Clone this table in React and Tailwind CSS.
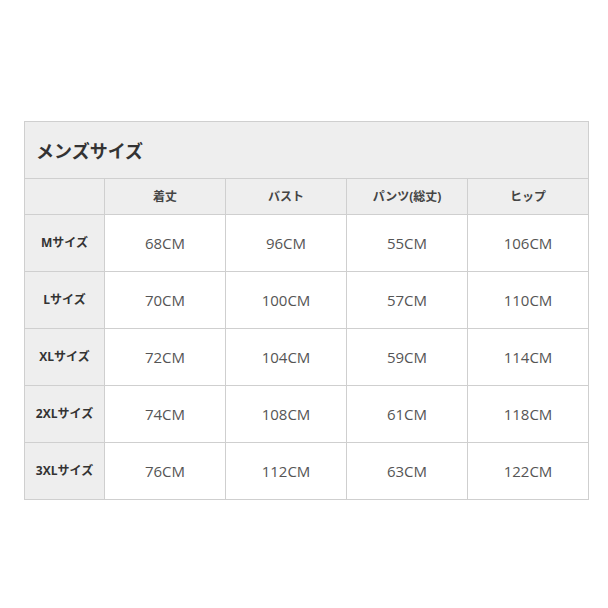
import React from "react";

const cols = ["着丈", "バスト", "パンツ(総丈)", "ヒップ"];
const rows = [
  ["Mサイズ", "68CM", "96CM", "55CM", "106CM"],
  ["Lサイズ", "70CM", "100CM", "57CM", "110CM"],
  ["XLサイズ", "72CM", "104CM", "59CM", "114CM"],
  ["2XLサイズ", "74CM", "108CM", "61CM", "118CM"],
  ["3XLサイズ", "76CM", "112CM", "63CM", "122CM"],
];

export default function App() {
  return (
    <div
      className="w-[608px] h-[608px] bg-white pt-[121px] pl-[24px]"
      style={{ fontFamily: '"Open Sans", "Noto Sans CJK JP", sans-serif' }}
    >
      <div className="grid grid-cols-[80px_121px_121px_121px_121px] w-[565px] border-l border-t border-[#cfcfcf]">
        <div className="col-span-5 h-[57px] bg-[#eeeeee] border-r border-b border-[#cfcfcf] flex items-center pl-[11px] pt-[2px] text-[18px] font-bold text-[#333]">
          メンズサイズ
        </div>
        <div className="h-[36px] bg-[#eeeeee] border-r border-b border-[#cfcfcf]"></div>
        {cols.map((c) => (
          <div
            key={c}
            className="h-[36px] bg-[#eeeeee] border-r border-b border-[#cfcfcf] flex items-center justify-center text-[12px] font-bold text-[#444]"
          >
            {c}
          </div>
        ))}
        {rows.map((r) => (
          <React.Fragment key={r[0]}>
            <div className="h-[57px] bg-[#eeeeee] border-r border-b border-[#cfcfcf] flex items-center justify-center text-[12px] font-bold text-[#333]">
              {r[0]}
            </div>
            {r.slice(1).map((v, i) => (
              <div
                key={i}
                className="h-[57px] bg-white border-r border-b border-[#cfcfcf] flex items-center justify-center text-[15px] text-[#555]"
              >
                {v}
              </div>
            ))}
          </React.Fragment>
        ))}
      </div>
    </div>
  );
}
